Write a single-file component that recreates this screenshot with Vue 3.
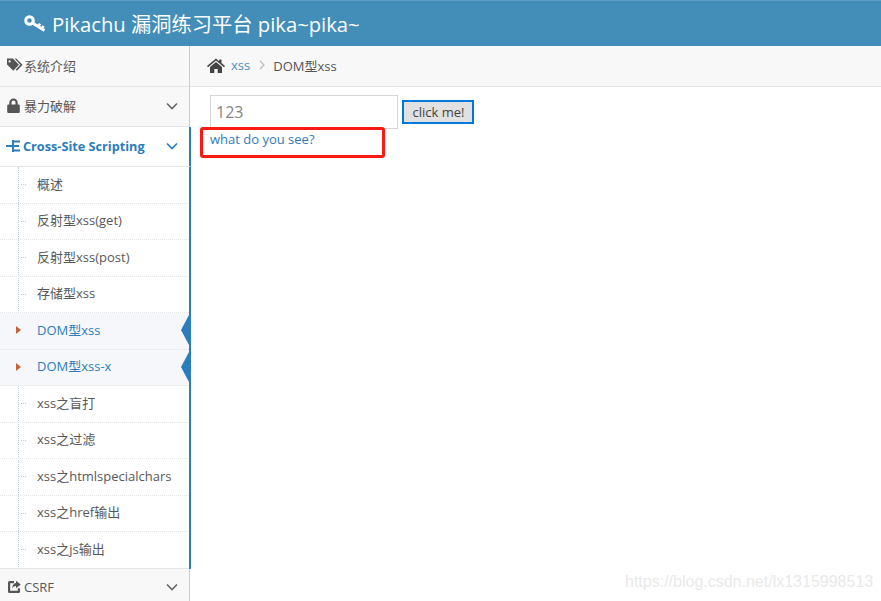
<script setup>
import { ref } from 'vue'

const subItems = ref([
  { name: '概述' },
  { name: '反射型xss(get)' },
  { name: '反射型xss(post)' },
  { name: '存储型xss' },
  { name: 'DOM型xss', active: true },
  { name: 'DOM型xss-x', active: true },
  { name: 'xss之盲打' },
  { name: 'xss之过滤' },
  { name: 'xss之htmlspecialchars' },
  { name: 'xss之href输出' },
  { name: 'xss之js输出' }
])
</script>

<template>
  <div class="page">
    <header class="navbar">
      <svg class="key" viewBox="0 0 22 18" width="22" height="18">
        <circle cx="5.500" cy="5.500" r="3.800" fill="none" stroke="#fff" stroke-width="3" />
        <path d="M8.500 8l12 7.500" fill="none" stroke="#fff" stroke-width="3" />
        <path d="M14.300 11.500l1.700-2.800M17.800 13.600l1.700-2.800" fill="none" stroke="#fff" stroke-width="2.500" />
      </svg>
      <span class="brand">Pikachu 漏洞练习平台 pika~pika~</span>
    </header>

    <div class="body">
      <aside class="sidebar">
        <div class="menu-row first">
          <svg class="menu-icon" viewBox="0 0 16 14" width="16" height="14">
            <path fill="#555" fill-rule="evenodd" d="M0 .500h5.900l6 6.300-5.600 5.900L0 6.400zM2.600 2.300a1.100 1.100 0 1 0 0 2.200 1.100 1.100 0 0 0 0-2.200z" />
            <path fill="#555" d="M7.600 .500h1.700l6.200 6.300-5.600 5.900-1.100-1.100L13.300 6.800z" />
          </svg>
          <span>系统介绍</span>
        </div>
        <div class="menu-row">
          <svg class="menu-icon lock" viewBox="0 0 13 15" width="13" height="15">
            <path fill="#555" d="M2.300 6.500V4.600a4.200 4.200 0 0 1 8.400 0v1.900h.9a1.200 1.200 0 0 1 1.200 1.200v6a1.200 1.200 0 0 1-1.200 1.200H1.400a1.200 1.200 0 0 1-1.200-1.200v-6a1.200 1.200 0 0 1 1.200-1.200zm2.200 0h4V4.600a2 2 0 0 0-4 0z" />
          </svg>
          <span>暴力破解</span>
          <svg class="chevron" viewBox="0 0 12 8" width="12" height="8">
            <path d="M1 1.500l5 5 5-5" fill="none" stroke="#666" stroke-width="1.600" />
          </svg>
        </div>
        <div class="menu-row open">
          <svg class="menu-icon" viewBox="0 0 14 14" width="14" height="14">
            <path fill="#2b7dbc" d="M6 1h2v12H6zM0 6h6v2H0zM8 1.500h6v2H8zM8 6h5v2H8zM8 10.500h6v2H8z" />
          </svg>
          <span>Cross-Site Scripting</span>
          <svg class="chevron" viewBox="0 0 12 8" width="12" height="8">
            <path d="M1 1.500l5 5 5-5" fill="none" stroke="#2b7dbc" stroke-width="1.600" />
          </svg>
        </div>
        <ul class="submenu">
          <li v-for="item in subItems" :key="item.name" class="sub-item" :class="{ active: item.active }">
            <span class="sub-dash"></span>
            <span>{{ item.name }}</span>
          </li>
        </ul>
        <div class="menu-row last">
          <svg class="menu-icon" viewBox="0 0 14 14" width="14" height="14">
            <path fill="#555" d="M2.500 1H7v2.200H3.200v7.600h7.600V8.200H13v3.300a1.500 1.500 0 0 1-1.500 1.500h-9A1.500 1.500 0 0 1 1 11.500v-9A1.500 1.500 0 0 1 2.500 1z" />
            <path fill="#555" d="M9 .800l4.800 3.700L9 8.200V6C7.200 6 6 6.800 5.200 8.600 5.200 5.600 6.600 3.400 9 3z" />
          </svg>
          <span>CSRF</span>
          <svg class="chevron" viewBox="0 0 12 8" width="12" height="8">
            <path d="M1 1.500l5 5 5-5" fill="none" stroke="#666" stroke-width="1.600" />
          </svg>
        </div>
      </aside>

      <main class="content">
        <div class="breadcrumb">
          <svg class="home" viewBox="0 0 18 15" width="18" height="15">
            <path fill="#444" d="M9 0.500l3.200 2.700V1.500h2.300v3.600L18 8l-1 1.200-8-6.700-8 6.700L0 8z" />
            <path fill="#444" d="M9 4l6 5v6h-4.300v-4H7.300v4H3V9z" />
          </svg>
          <a class="crumb-link">xss</a>
          <svg class="crumb-sep" viewBox="0 0 6 10" width="6" height="10">
            <path d="M1 1l4 4-4 4" fill="none" stroke="#bbb" stroke-width="1.200" />
          </svg>
          <span class="crumb-current">DOM型xss</span>
        </div>
        <div class="panel">
          <div class="form-line">
            <input class="text-input" type="text" value="123" />
            <button class="click-btn">click me!</button>
          </div>
          <a class="result-link">what do you see?</a>
          <div class="red-box"></div>
        </div>
      </main>
    </div>
    <div class="watermark">https://blog.csdn.net/lx1315998513</div>
  </div>
</template>

<style>
html, body {
  margin: 0;
  overflow: hidden;
  background: #fff;
}
</style>

<style scoped>
.page {
  position: relative;
  width: 881px;
  height: 601px;
  overflow: hidden;
  font-family: "Open Sans", "Noto Sans CJK SC", sans-serif;
  font-size: 13px;
  color: #585858;
}
.navbar {
  height: 46px;
  box-sizing: border-box;
  border-top: 1px solid #5b9dc4;
  background: #438eb9;
  display: flex;
  align-items: center;
  padding-left: 24px;
  padding-bottom: 2px;
  gap: 6px;
}
.key {
  flex: none;
  margin-top: 3px;
}
.brand {
  color: #fff;
  font-size: 20.260px;
}
.body {
  display: flex;
  height: 555px;
}
.sidebar {
  width: 190px;
  flex: none;
  box-sizing: border-box;
  border-right: 1px solid #ccc;
}
.menu-row {
  height: 40px;
  box-sizing: border-box;
  background: #f8f8f8;
  border-bottom: 1px solid #e5e5e5;
  display: flex;
  align-items: center;
  padding-left: 7px;
  padding-right: 11px;
  padding-bottom: 2px;
}
.menu-row.first {
  height: 41px;
}
.menu-icon {
  flex: none;
  margin-right: 3px;
}
.menu-icon.lock {
  margin-right: 4px;
}
.menu-row.first .menu-icon {
  margin-right: 1px;
}
.chevron {
  margin-left: auto;
}
.menu-row.open {
  background: #fff;
  color: #2b7dbc;
  font-weight: 700;
  font-size: 12.700px;
  padding-left: 6px;
  margin-right: -2px;
  border-right: 2px solid #2b7dbc;
  position: relative;
}
.menu-row.last {
  height: 39px;
  border-bottom: none;
  border-top: 1px solid #e5e5e5;
  position: relative;
}
.submenu {
  list-style: none;
  margin: 0 -2px -1px 0;
  padding: 0;
  height: 402px;
  border-right: 2px solid #2b7dbc;
  position: relative;
  background: #fff;
}
.submenu::before {
  content: "";
  position: absolute;
  left: 18px;
  top: 0;
  bottom: 0;
  border-left: 1px dotted #b4cde2;
}
.sub-item {
  height: 36.540px;
  box-sizing: border-box;
  border-bottom: 1px dotted #e4e4e4;
  display: flex;
  align-items: center;
  padding-left: 37px;
  padding-bottom: 3.400px;
  position: relative;
}
.sub-dash {
  position: absolute;
  left: 21px;
  top: 17px;
  width: 5px;
  border-top: 1px dotted #b4cde2;
}
.sub-item.active {
  background: #f5f7fa;
  color: #2b7dbc;
}
.sub-item.active .sub-dash {
  left: 16px;
  top: 13px;
  width: 0;
  border-top: 4px solid transparent;
  border-bottom: 4px solid transparent;
  border-left: 5px solid #c86139;
}
.sub-item.active::after {
  content: "";
  position: absolute;
  right: 0;
  top: 2px;
  border-top: 15px solid transparent;
  border-bottom: 15px solid transparent;
  border-right: 8px solid #2b7dbc;
}
.content {
  flex: 1;
}
.breadcrumb {
  height: 41px;
  box-sizing: border-box;
  background: #f8f8f8;
  border-bottom: 1px solid #e5e5e5;
  display: flex;
  align-items: center;
  padding-left: 17px;
  padding-bottom: 2px;
}
.home {
  margin-right: 6px;
}
.crumb-link {
  color: #4c8fbd;
}
.crumb-sep {
  margin: 0 8px 0 9px;
}
.crumb-current {
  color: #555;
}
.panel {
  position: relative;
  padding: 8px 0 0 20px;
}
.form-line {
  display: flex;
  align-items: center;
  gap: 4px;
}
.text-input {
  width: 188px;
  height: 34px;
  box-sizing: border-box;
  border: 1px solid #d5d5d5;
  padding: 0 5px;
  font: 16px "Open Sans", sans-serif;
  color: #858585;
  outline: none;
}
.click-btn {
  width: 72px;
  height: 24px;
  box-sizing: border-box;
  border: 2px solid #0078d7;
  background: #e1e1e1;
  color: #444;
  font: 13px "Open Sans", sans-serif;
  padding: 0 0 0 1px;
}
.result-link {
  display: block;
  color: #337ab7;
  font-size: 13px;
  line-height: 18px;
  margin-top: 1px;
}
.red-box {
  position: absolute;
  left: 10px;
  top: 40px;
  width: 185px;
  height: 31px;
  box-sizing: border-box;
  border: 3px solid #fa1a12;
  border-radius: 3px;
}
.watermark {
  position: absolute;
  left: 625px;
  top: 573px;
  font-family: "Liberation Sans", sans-serif;
  font-size: 16px;
  color: #e9e9e9;
  white-space: nowrap;
}
</style>
